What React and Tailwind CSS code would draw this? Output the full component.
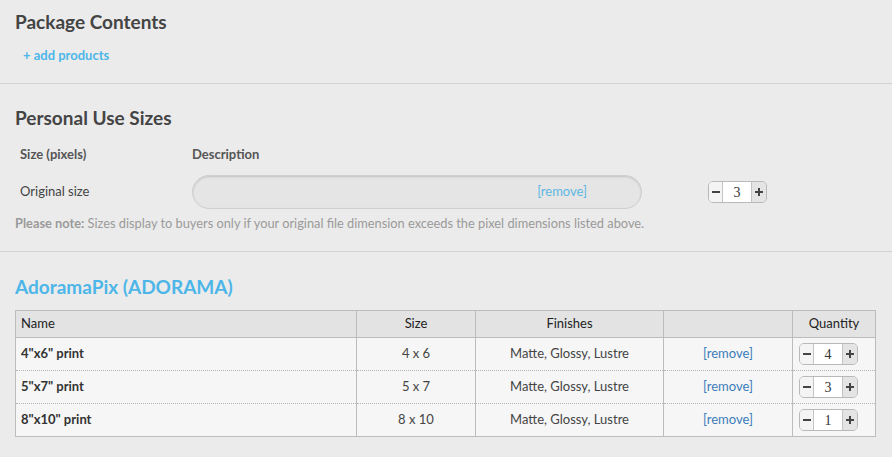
import React from "react";

const font = { fontFamily: "Lato, 'Open Sans', sans-serif" };

const items = [
    { name: '4"x6" print', size: "4 x 6", qty: 4 },
    { name: '5"x7" print', size: "5 x 7", qty: 3 },
    { name: '8"x10" print', size: "8 x 10", qty: 1 },
];

const Stepper = ({ value }) => (
    <div className="flex h-[22px] w-[59px] rounded-[5px] border border-[#b9b9b9] bg-[#ececec] overflow-hidden">
        <div className="w-[14px] flex items-center justify-center border-r border-[#c4c4c4] bg-[#f4f4f4]">
            <div className="w-[8px] h-[2px] bg-[#444]" />
        </div>
        <div className="flex-1 flex items-end justify-center bg-white text-[14px] leading-[19px] text-[#333]" style={{ fontFamily: "'Liberation Serif', serif" }}>
            {value}
        </div>
        <div className="w-[15px] flex items-center justify-center border-l border-[#c4c4c4] bg-[#e4e4e4]">
            <svg width="8" height="8" viewBox="0 0 8 8">
                <rect x="0" y="3" width="8" height="2" fill="#444" />
                <rect x="3" y="0" width="2" height="8" fill="#444" />
            </svg>
        </div>
    </div>
);

export default function App() {
    return (
        <div className="w-[892px] h-[457px] bg-[#ebebeb] text-[#444] overflow-hidden" style={font}>
            {/* package contents */}
            <div className="pt-[11px] px-[15px] h-[83px]">
                <h2 className="text-[19px] leading-[22px] font-bold text-[#444]">Package Contents</h2>
                <div className="mt-[14px] pl-[8px] text-[13px] leading-[16px] font-bold text-[#4db6e8]">+ add products</div>
            </div>
            <div className="h-px bg-[#d3d3d3]" />

            {/* personal use sizes */}
            <div className="pt-[23px] px-[15px] h-[167px]">
                <h2 className="text-[19px] leading-[22px] font-bold text-[#444]">Personal Use Sizes</h2>
                <div className="flex mt-[18px] h-[16px] items-center text-[13px] font-bold text-[#555]">
                    <div className="w-[177px] pl-[5px]">Size (pixels)</div>
                    <div>Description</div>
                </div>
                <div className="flex mt-[12px] items-center h-[34px]">
                    <div className="w-[177px] pl-[5px] text-[13px] text-[#444]">Original size</div>
                    <div className="w-[450px] h-[34px] rounded-full border border-[#cfcfcf] bg-[#e5e5e5] shadow-[inset_0_1px_2px_rgba(0,0,0,0.15)] flex items-center justify-end pr-[54px] text-[13px] text-[#5db7e2]">
                        [remove]
                    </div>
                    <div className="ml-[66px]">
                        <Stepper value={3} />
                    </div>
                </div>
                <p className="mt-[6px] text-[12.8px] leading-[16px] text-[#9a9a9a]">
                    <span className="font-bold">Please note:</span> Sizes display to buyers only if your original file dimension exceeds the pixel dimensions listed above.
                </p>
            </div>
            <div className="h-px bg-[#d3d3d3]" />

            {/* adorama */}
            <div className="pt-[24px] px-[15px]">
                <h2 className="text-[19px] leading-[22px] font-bold text-[#4db6e8]">AdoramaPix (ADORAMA)</h2>
                <table className="mt-[12px] w-[860px] border-collapse border border-[#bcbcbc] text-[13px] table-fixed">
                    <colgroup>
                        <col className="w-[341px]" />
                        <col className="w-[119px]" />
                        <col className="w-[188px]" />
                        <col className="w-[129px]" />
                        <col className="w-[83px]" />
                    </colgroup>
                    <thead>
                        <tr className="h-[27px] bg-[#e3e3e3] text-[#222]">
                            <th className="border border-[#bcbcbc] text-left font-normal pl-[5px]">Name</th>
                            <th className="border border-[#bcbcbc] font-normal">Size</th>
                            <th className="border border-[#bcbcbc] font-normal">Finishes</th>
                            <th className="border border-[#bcbcbc] font-normal"></th>
                            <th className="border border-[#bcbcbc] font-normal">Quantity</th>
                        </tr>
                    </thead>
                    <tbody>
                        {items.map((it, i) => (
                            <tr key={it.name} className={"h-[33px] bg-[#f6f6f6] " + (i > 0 ? "border-t border-dotted border-[#b5b5b5]" : "")}>
                                <td className="pl-[5px] font-bold text-[#333] border-r border-[#bcbcbc]">{it.name}</td>
                                <td className="text-center text-[#444] border-r border-[#bcbcbc]">{it.size}</td>
                                <td className="text-center text-[#444] border-r border-[#bcbcbc]">Matte, Glossy, Lustre</td>
                                <td className="text-center text-[#3b7dbb] border-r border-[#bcbcbc]">[remove]</td>
                                <td className="pl-[6px]">
                                    <Stepper value={it.qty} />
                                </td>
                            </tr>
                        ))}
                    </tbody>
                </table>
            </div>
        </div>
    );
}
